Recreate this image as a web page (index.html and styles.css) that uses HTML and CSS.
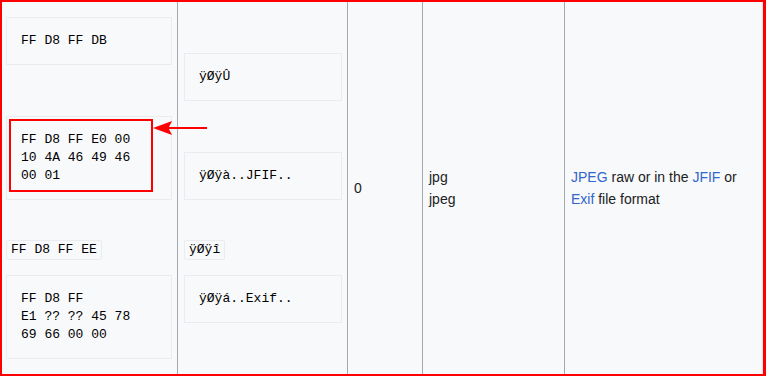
FILE: index.html
```html
<!DOCTYPE html>
<html lang="en">
<head>
<meta charset="utf-8">
<title>JPEG file signature</title>
<link rel="stylesheet" href="styles.css">
</head>
<body>
<div class="page">
  <div class="row">
    <div class="cell">
      <pre class="hex">FF D8 FF DB</pre>
      <pre class="hex gap-pre">FF D8 FF E0 00
10 4A 46 49 46
00 01</pre>
      <div class="gap-code"><code class="inline">FF D8 FF EE</code></div>
      <pre class="hex gap-after-code">FF D8 FF
E1 ?? ?? 45 78
69 66 00 00</pre>
    </div>
    <div class="cell">
      <pre class="hex">ÿØÿÛ</pre>
      <pre class="hex gap-pre">ÿØÿà..JFIF..</pre>
      <div class="gap-code"><code class="inline">ÿØÿî</code></div>
      <pre class="hex gap-after-code">ÿØÿá..Exif..</pre>
    </div>
    <div class="cell"><div class="txt">0</div></div>
    <div class="cell"><div class="txt">jpg<br>jpeg</div></div>
    <div class="cell last"><div class="txt"><a href="#">JPEG</a> raw or in the <a href="#">JFIF</a> or <a href="#">Exif</a> file format</div></div>
  </div>

  <div class="mark-box"></div>
  <svg class="mark-arrow" width="60" height="20" viewBox="0 0 60 20" aria-hidden="true">
    <polygon points="0,8 19,1 16,7 54,7 54,9 16,9 19,15" fill="#f00"/>
  </svg>
  <div class="frame"></div>
</div>
</body>
</html>
```

FILE: styles.css
```css
* { box-sizing: border-box; }

html, body {
  margin: 0;
  padding: 0;
  background: #f8f9fa;
}

.page {
  position: relative;
  width: 766px;
  height: 376px;
  overflow: hidden;
  background: #f8f9fa;
}

.row {
  display: grid;
  grid-template-columns: 178px 170px 75px 142px 198px;
  height: 376px;
}

.cell {
  display: flex;
  flex-direction: column;
  justify-content: center;
  padding: 0 5px 0 6px;
  border-right: 1px solid #a2a9b1;
  font-family: "Liberation Sans", Arial, sans-serif;
  font-size: 14px;
  line-height: 22px;
  color: #202122;
}

.cell.last {
  border-right-color: #e3e5e8;
}

.txt a {
  color: #3366cc;
  text-decoration: none;
}

.hex {
  margin: 0;
  padding: 14px;
  border: 1px solid #eaecf0;
  background: #f8f9fa;
  font-family: "Liberation Mono", "Courier New", monospace;
  font-size: 13px;
  line-height: 18px;
  color: #000;
  white-space: pre;
}

.gap-pre { margin-top: 51px; }
.gap-code { margin-top: 40px; line-height: 20px; height: 20px; }
.gap-after-code { margin-top: 15px; }

.inline {
  display: inline-block;
  padding: 1px 4px;
  border: 1px solid #eaecf0;
  border-radius: 2px;
  background: #f8f9fa;
  font-family: "Liberation Mono", "Courier New", monospace;
  font-size: 13px;
  line-height: 16px;
  color: #000;
  vertical-align: top;
}

.mark-box {
  position: absolute;
  left: 9px;
  top: 119px;
  width: 144px;
  height: 73px;
  border: 2px solid #f00;
}

.mark-arrow {
  position: absolute;
  left: 153px;
  top: 120px;
}

.frame {
  position: absolute;
  left: 0;
  top: 0;
  width: 766px;
  height: 376px;
  border: 2px solid #f00;
  border-right-width: 3px;
  pointer-events: none;
}
```
